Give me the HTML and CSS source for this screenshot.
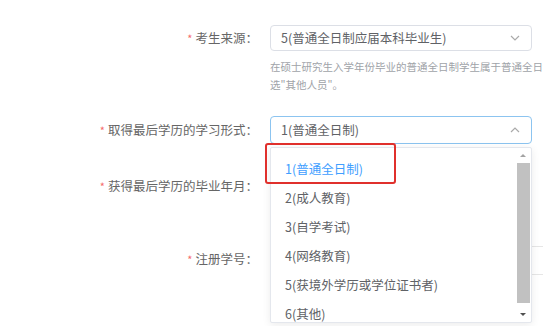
FILE: index.html
```html
<!DOCTYPE html>
<html lang="zh-CN">
<head>
<meta charset="UTF-8">
<meta name="viewport" content="width=device-width, initial-scale=1.0">
<title>报名信息</title>
<link rel="stylesheet" href="styles.css">
</head>
<body>

<div class="form">
  <div class="row">
    <label class="label"><span class="req">*</span>考生来源：</label>
    <div class="select">
      <span class="value">5(普通全日制应届本科毕业生)</span>
      <svg class="arrow" width="10" height="6" viewBox="0 0 10 6"><path d="M1 1l4 4 4-4" fill="none" stroke="#aaa" stroke-width="1.2"/></svg>
    </div>
  </div>
  <div class="hint">在硕士研究生入学年份毕业的普通全日制学生属于普通全日制应届本科毕业生，其他请选"其他人员"。</div>

  <div class="row row-gap">
    <label class="label"><span class="req">*</span>取得最后学历的学习形式：</label>
    <div class="select focus">
      <span class="value">1(普通全日制)</span>
      <svg class="arrow" width="10" height="6" viewBox="0 0 10 6"><path d="M1 5l4-4 4 4" fill="none" stroke="#aaa" stroke-width="1.2"/></svg>
    </div>
  </div>

  <div class="row row-3">
    <label class="label"><span class="req">*</span>获得最后学历的毕业年月：</label>
    <div class="field"></div>
  </div>

  <div class="row row-4">
    <label class="label"><span class="req">*</span>注册学号：</label>
    <div class="field input-under"></div>
  </div>
</div>

<!-- open dropdown of the second select -->
<div class="dropdown">
  <ul class="options">
    <li class="active">1(普通全日制)</li>
    <li>2(成人教育)</li>
    <li>3(自学考试)</li>
    <li>4(网络教育)</li>
    <li>5(获境外学历或学位证书者)</li>
    <li>6(其他)</li>
  </ul>
  <div class="scrollbar">
    <div class="sb-btn up"></div>
    <div class="sb-thumb"></div>
    <div class="sb-btn down"></div>
  </div>
</div>

<div class="mark"></div>

</body>
</html>
```

FILE: styles.css
```css
body {
  margin: 0;
  width: 543px;
  height: 326px;
  overflow: hidden;
  position: relative;
  background: #fff;
  font-family: "Noto Sans CJK SC", "Noto Sans", sans-serif;
  font-size: 12px;
  color: #606266;
}
.form {
  padding-top: 24px;
}
.row {
  display: flex;
  align-items: center;
  gap: 12px;
  height: 27px;
}
.label {
  width: 258px;
  flex: none;
  text-align: right;
  font-size: 12.5px;
  color: #666;
  white-space: nowrap;
}
.req {
  color: #f56c6c;
  margin-right: 3px;
  font-size: 11px;
}
.select {
  width: 262px;
  height: 26px;
  border: 1px solid #dcdfe6;
  border-radius: 4px;
  display: flex;
  align-items: center;
  justify-content: space-between;
  padding: 0 11px 0 10px;
  box-sizing: border-box;
  flex: none;
}
.select.focus {
  height: 28px;
  border-color: #8cc4f0;
}
.select .value {
  font-size: 12.5px;
  color: #606266;
}
.hint {
  margin: 7px 0 0 270px;
  width: 402px;
  font-size: 10.5px;
  line-height: 18px;
  color: #a0a3a8;
}
.row-gap {
  margin-top: 22px;
}
.row-3 {
  margin-top: 29px;
}
.row-4 {
  margin-top: 46px;
}
.field {
  width: 262px;
  height: 27px;
  flex: none;
}
.input-under {
  width: 290px;
  border-top: 1px solid #e6e6e6;
  border-bottom: 1px solid #e6e6e6;
  margin-top: 4px;
}
.dropdown {
  position: absolute;
  left: 270px;
  top: 147px;
  width: 262px;
  height: 176px;
  background: #fff;
  border: 1px solid #e4e7ed;
  border-radius: 2px;
  box-shadow: 0 2px 8px rgba(0, 0, 0, 0.08);
  overflow: hidden;
  box-sizing: border-box;
}
.options {
  list-style: none;
  margin: 0;
  padding: 6px 0 0;
}
.options li {
  height: 29px;
  line-height: 29px;
  padding-left: 14px;
  font-size: 12.5px;
  color: #606266;
}
.options li.active {
  color: #409eff;
}
.scrollbar {
  position: absolute;
  right: 1px;
  top: 0;
  bottom: 0;
  width: 13px;
  background: #fff;
  display: flex;
  flex-direction: column;
}
.sb-btn {
  height: 15px;
  flex: none;
  position: relative;
}
.sb-btn::after {
  content: "";
  position: absolute;
  left: 3px;
  border-left: 3px solid transparent;
  border-right: 3px solid transparent;
}
.sb-btn.up::after {
  top: 6px;
  border-bottom: 3px solid #a3a3a3;
}
.sb-btn.down::after {
  top: 6px;
  border-top: 3px solid #505050;
}
.sb-thumb {
  flex: 1;
  background: #c1c1c1;
  margin: 0 0 4px;
}
.mark {
  position: absolute;
  left: 265px;
  top: 143px;
  width: 131px;
  height: 41px;
  border: 2px solid #e0302c;
  border-radius: 3px;
  box-sizing: border-box;
}
```
